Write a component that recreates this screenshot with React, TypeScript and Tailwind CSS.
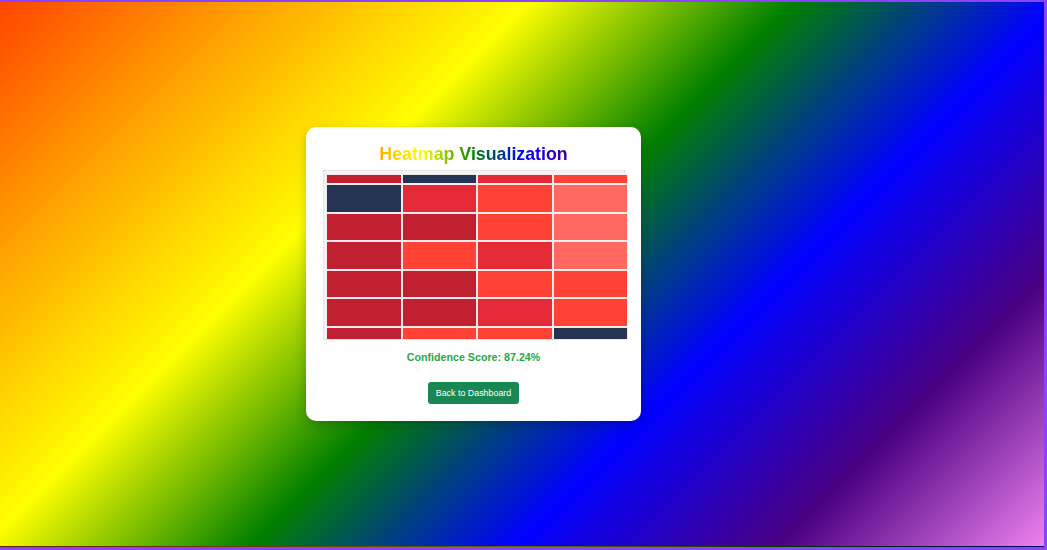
const dr = 'bg-[#c0202f]';
const nv = 'bg-[#263352]';
const mr = 'bg-[#e32a36]';
const br = 'bg-[#ff4136]';
const sm = 'bg-[#ff6961]';

const rows = [
  [dr, nv, mr, br],
  [nv, mr, br, sm],
  [dr, dr, br, sm],
  [dr, br, mr, sm],
  [dr, dr, br, br],
  [dr, dr, mr, br],
  [dr, br, br, nv],
];

export default function App() {
  return (
    <div className="h-[550px] bg-[#8a43f8] pt-[2px] pr-[3px] pb-[3px] font-['Liberation_Sans',Arial,sans-serif]">
      <div className="h-full border-b border-black/60 bg-[linear-gradient(135deg,orangered,orange,yellow,green,blue,indigo,violet)] flex items-center justify-center pr-[97px]">
        <div className="w-[335px] rounded-[10px] bg-white p-[17px] flex flex-col items-center shadow-[0_4px_12px_rgba(0,0,0,0.2)]">
          <h2 className="w-full text-center text-[17.8px] leading-[20.5px] font-bold bg-[linear-gradient(90deg,red,orange,yellow,green,blue,indigo,violet)] bg-clip-text text-transparent">
            Heatmap Visualization
          </h2>
          <div className="mt-[5.5px] w-[302px] h-[170px] border border-dotted border-[#d8d8d8] bg-[#f3f3f3] pt-[3px] pl-[2.5px]">
            <div className="w-[302px] h-[165px] overflow-hidden">
              <div className="grid grid-cols-4 grid-rows-[9.7px_repeat(6,28.6px)]">
                {rows.flatMap((row, i) =>
                  row.map((c, j) => (
                    <div key={`${i}-${j}`} className={`${c} border border-white/90`} />
                  ))
                )}
              </div>
            </div>
          </div>
          <p className="mt-[11px] text-[10.7px] leading-[12.3px] font-bold text-[#28a745]">
            Confidence Score: 87.24%
          </p>
          <button className="mt-[18.5px] bg-[#198754] text-white text-[8.9px] leading-[10.2px] px-[7.3px] py-[5.6px] rounded-[3px]">
            Back to Dashboard
          </button>
        </div>
      </div>
    </div>
  );
}
